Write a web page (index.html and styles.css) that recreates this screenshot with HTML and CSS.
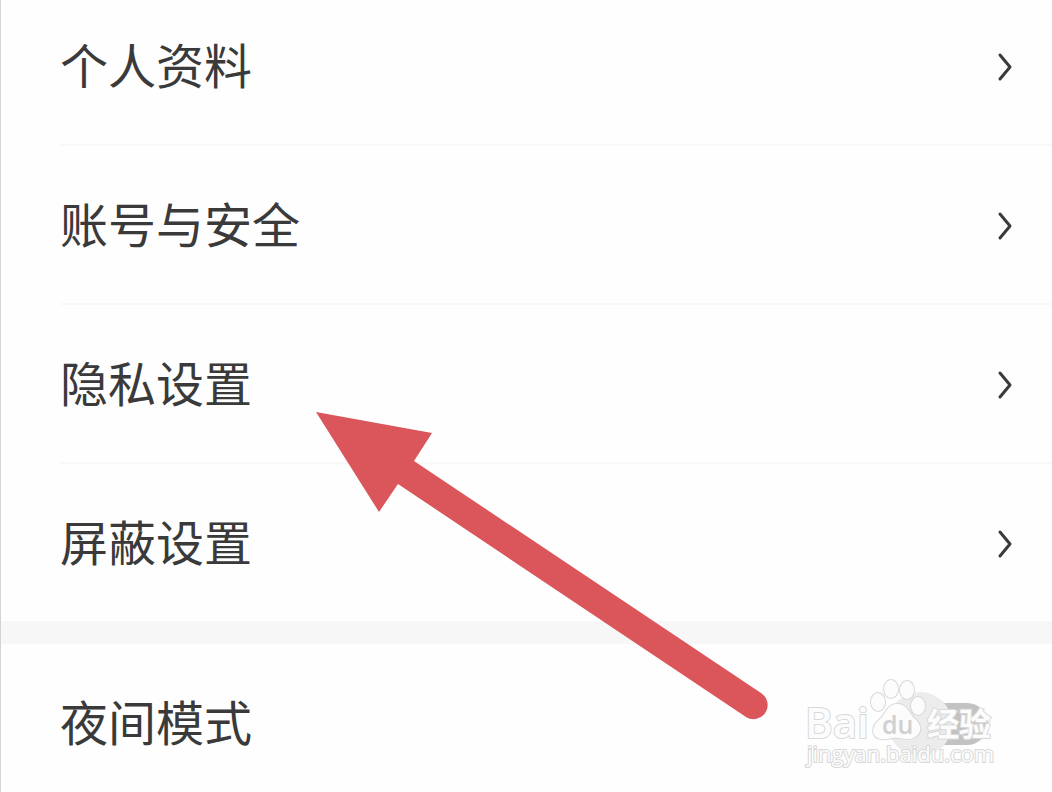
FILE: index.html
```
<!DOCTYPE html>
<html lang="zh-CN">
<head>
    <meta charset="UTF-8">
    <meta name="viewport" content="width=device-width, initial-scale=1.0">
    <title>设置</title>
    <link rel="stylesheet" href="styles.css">
</head>
<body>
    <main class="settings">
        <nav class="group">
            <a class="row" href="#profile">
                <span class="title">个人资料</span>
                <svg class="chevron" viewBox="0 0 16 30"><path d="M3 3 L13 15 L3 27"/></svg>
            </a>
            <a class="row" href="#account">
                <span class="title">账号与安全</span>
                <svg class="chevron" viewBox="0 0 16 30"><path d="M3 3 L13 15 L3 27"/></svg>
            </a>
            <a class="row" href="#privacy">
                <span class="title">隐私设置</span>
                <svg class="chevron" viewBox="0 0 16 30"><path d="M3 3 L13 15 L3 27"/></svg>
            </a>
            <a class="row" href="#block">
                <span class="title">屏蔽设置</span>
                <svg class="chevron" viewBox="0 0 16 30"><path d="M3 3 L13 15 L3 27"/></svg>
            </a>
        </nav>
        <section class="group">
            <div class="row">
                <label class="title" for="night">夜间模式</label>
                <input class="switch" type="checkbox" id="night">
            </div>
        </section>

        <!-- arrow pointing at the privacy row -->
        <svg class="arrow" viewBox="0 0 452 308">
            <path d="M0 0 L116 21 L98 49 L445 281 A14 14 0 0 1 430 305 L82 72 L63 100 Z"/>
        </svg>

        <svg class="watermark" viewBox="0 0 196 96">
            <g class="mark">
                <text class="bai" x="1" y="58">Bai</text>
                <ellipse cx="74" cy="22" rx="7" ry="9"/>
                <ellipse cx="87" cy="9" rx="7" ry="9"/>
                <ellipse cx="103" cy="10" rx="7" ry="9"/>
                <ellipse cx="114" cy="26" rx="7" ry="9"/>
                <path d="M93 24 C83 24 82 34 76 39 C66 47 67 58 78 59 C86 60 87 57 94 58 C100 58 105 61 111 57 C119 52 117 44 111 39 C105 34 104 24 93 24 Z"/>
                <text class="jingyan" x="123" y="56">经验</text>
                <text class="domain" x="3" y="82">jingyan.baidu.com</text>
            </g>
            <text class="du" x="78" y="54">du</text>
        </svg>
    </main>
</body>
</html>
```
FILE: styles.css
```
* {
    box-sizing: border-box;
}
body {
    margin: 0;
    background-color: #fefefe;
    color: #3a3a3a;
    font-family: "Noto Sans CJK SC", sans-serif;
    font-size: 48px;
    line-height: 56px;
}
.settings {
    position: relative;
    border-left: 1px solid #d4d4d4;
}
.group + .group {
    border-top: 23px solid #f7f7f7;
}
.row {
    display: flex;
    align-items: center;
    justify-content: space-between;
    margin-left: 59px;
    padding: 48px 39px 45px 0;
    border-bottom: 2px solid #f8f8f8;
    color: inherit;
    text-decoration: none;
}
.row:last-child {
    border-bottom: none;
}
nav .row:first-child {
    padding-top: 35px;
}
.group + .group .row {
    padding-right: 64px;
    padding-bottom: 36px;
}
.title {
    padding-bottom: 8px;
}
.chevron {
    width: 16px;
    height: 30px;
    fill: none;
    stroke: #3a3a3a;
    stroke-width: 3;
    stroke-linecap: round;
    stroke-linejoin: round;
}

.switch {
    appearance: none;
    position: relative;
    width: 88px;
    height: 42px;
    margin: 0;
    border-radius: 21px;
    background-color: #c2c2c2;
}
.switch::before {
    content: "";
    position: absolute;
    top: -11px;
    left: -12px;
    width: 64px;
    height: 64px;
    border-radius: 50%;
    background-color: #ececec;
}

.arrow {
    position: absolute;
    top: 412px;
    left: 30%;
    width: 452px;
    height: 308px;
    fill: #db565b;
}

.watermark {
    position: absolute;
    right: 52px;
    bottom: 16px;
    width: 196px;
    height: 96px;
    overflow: visible;
    pointer-events: none;
}
.mark {
    fill: #fcfcfc;
    stroke: #d8d8d8;
    stroke-width: 2;
    paint-order: stroke;
}
.bai {
    font: 600 42px "Open Sans", sans-serif;
}
.jingyan {
    font: bold 32px "Noto Sans CJK SC", sans-serif;
}
.domain {
    font: 22px "Open Sans", sans-serif;
}
.du {
    font: 600 25px "Open Sans", sans-serif;
    fill: #d0d0d0;
}
```
